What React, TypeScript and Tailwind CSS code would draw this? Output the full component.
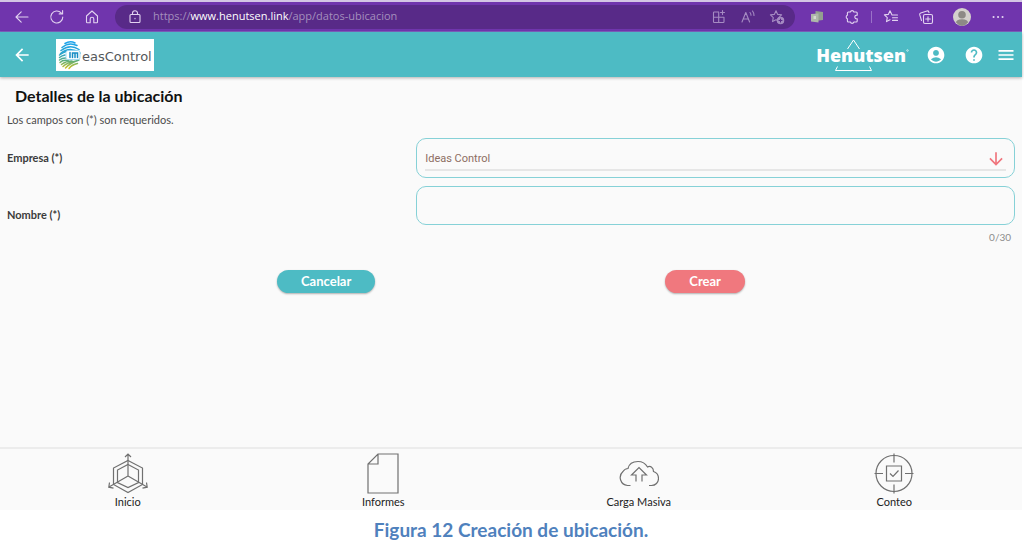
import { useState } from 'react';
import type { ReactNode } from 'react';
import { MdAccountCircle, MdArrowBack, MdArrowDownward, MdHelp, MdMenu } from 'react-icons/md';

function Glyph({ children, className = 'size-4' }: { children: ReactNode; className?: string }) {
  return (
    <svg
      viewBox="0 0 16 16"
      fill="none"
      stroke="currentColor"
      strokeWidth="1.1"
      strokeLinecap="round"
      strokeLinejoin="round"
      className={className}
      aria-hidden="true"
    >
      {children}
    </svg>
  );
}

const star = 'M7 1.8l1.7 3.6 3.9.5-2.9 2.7.8 4L7 10.7l-3.5 1.9.8-4L1.4 5.900l3.900-.5z';

function BrowserBar() {
  return (
    <div className="flex h-8 items-center border-t-2 border-b border-t-[#d3c6e4] border-b-[#7e62c0] bg-[#7035ad] text-[#e2d3f0]">
      <div className="flex w-[115px] shrink-0 items-center gap-[19px] pl-3.5">
        <button type="button" aria-label="Atrás">
          <Glyph>
            <path d="M14 8H2M7.200 2.800L2 8l5.200 5.200" />
          </Glyph>
        </button>
        <button type="button" aria-label="Actualizar">
          <Glyph>
            <path d="M13.800 8A6 6 0 1 1 12.200 3.900M13.600 1.600v3.300h-3.400" />
          </Glyph>
        </button>
        <button type="button" aria-label="Página principal">
          <Glyph>
            <path d="M2.500 7L8 2l5.500 5v6a.8.8 0 0 1-.8.8H9.800V10a1.800 1.800 0 0 0-3.600 0v3.800H3.300a.8.8 0 0 1-.8-.8z" />
          </Glyph>
        </button>
      </div>
      <div className="flex h-6 min-w-0 flex-1 items-center rounded-full bg-[#582a88] pr-2.5 pl-3">
        <Glyph>
          <rect x="3" y="5.500" width="10" height="8" rx="1" />
          <path d="M5.500 5.500V4.200a2.500 2.500 0 0 1 5 0v1.300M8 9.300v.4" />
        </Glyph>
        <div className="ml-2.5 flex-1 truncate font-['Open_Sans','Noto_Sans',sans-serif] text-[11px] text-[#a48fbd]">
          https://<span className="text-white">www.henutsen.link</span>/app/datos-ubicacion
        </div>
        <div className="flex items-center gap-[13px] text-[#a58bc2]">
          <button type="button" aria-label="Aplicaciones">
            <Glyph>
              <path d="M7.500 3H3.200a.7.7 0 0 0-.7.7v9.100c0 .4.300.7.700.7h9.100c.4 0 .7-.3.700-.7V8.200M2.500 8.200H13M7.700 3v10.500M11.500 1.500v4M9.500 3.500h4" />
            </Glyph>
          </button>
          <button type="button" aria-label="Leer en voz alta">
            <Glyph>
              <path d="M2 13L5.800 3.500 9.600 13M3.300 10h5M10 3.500a4 4 0 0 1 1 2.700M12.500 2a6.500 6.500 0 0 1 1.500 4.500" />
            </Glyph>
          </button>
          <button type="button" aria-label="Agregar a favoritos">
            <Glyph>
              <path d={star} />
              <circle cx="11.500" cy="11.500" r="3.200" fill="#a58bc2" />
              <path d="M11.500 10v3M10 11.500h3" stroke="#582a88" />
            </Glyph>
          </button>
        </div>
      </div>
      <div className="flex w-[227px] shrink-0 items-center gap-[19px] pl-3.5">
        <button type="button" aria-label="Extensión">
          <svg viewBox="0 0 16 16" className="size-4" aria-hidden="true">
            <path d="M6.500 2l7.500 1v8l-7.500 1z" fill="#93a08f" />
            <path d="M2 5l7.500-.5v9L2 12.500z" fill="#aeb8aa" />
            <path d="M4.500 7H7v3H4.500z" fill="#d5dad0" />
          </svg>
        </button>
        <button type="button" aria-label="Extensiones">
          <Glyph>
            <path d="M4.400 3h2a1.800 1.800 0 0 1 3.500 0h2.300c.6 0 1 .4 1 1v2.300a1.800 1.800 0 1 0 0 3.400V12c0 .6-.4 1-1 1H9.900a1.800 1.800 0 0 1-3.500 0h-2a1 1 0 0 1-1-1V9.700a1.800 1.800 0 0 1 0-3.400V4a1 1 0 0 1 1-1z" />
          </Glyph>
        </button>
        <span className="-mx-2 h-3 w-px bg-[#9a72c8]" />
        <button type="button" aria-label="Favoritos">
          <Glyph>
            <path d="M9 6L7 1.800 5.300 5.400l-3.900.5 2.900 2.700-.8 4L7 10.700M9 6h5.500M9.500 8.700h5M9.500 11.400h5" />
          </Glyph>
        </button>
        <button type="button" aria-label="Colecciones">
          <Glyph>
            <rect x="5.500" y="5.500" width="9" height="9" rx="1.500" />
            <path d="M10 7.700v4.600M7.700 10h4.600M3.500 11.500L1.700 5.700a1.500 1.500 0 0 1 1-1.800L9 2a1.500 1.500 0 0 1 1.800 1l.2.600" />
          </Glyph>
        </button>
        <button type="button" aria-label="Perfil">
          <svg viewBox="0 0 18 18" className="size-[18px]" aria-hidden="true">
            <circle cx="9" cy="9" r="9" fill="#d4d0cd" />
            <circle cx="9" cy="6.800" r="3.800" fill="#8d8986" />
            <path d="M3 14.500c0-2 2-3.300 6-3.300s6 1.300 6 3.300A9 9 0 0 1 9 18a9 9 0 0 1-6-3.500z" fill="#8d8986" />
          </svg>
        </button>
        <button type="button" aria-label="Más">
          <Glyph>
            <path d="M3.500 8h.1M8 8h.1M12.500 8h.1" strokeWidth="2" />
          </Glyph>
        </button>
      </div>
    </div>
  );
}

function IdeasControlLogo() {
  return (
    <div className="flex h-8 w-[98px] items-center bg-white pl-0.5">
      <svg viewBox="0 0 24 30" className="h-[30px] w-6 shrink-0" fill="none" strokeWidth="1.500" strokeLinecap="round" aria-hidden="true">
        <defs>
          <linearGradient id="print" x1="0" y1="0" x2="0" y2="30" gradientUnits="userSpaceOnUse">
            <stop offset="0" stopColor="#1ba4f2" />
            <stop offset=".45" stopColor="#2aa3cd" />
            <stop offset=".7" stopColor="#5eae79" />
            <stop offset="1" stopColor="#e6c814" />
          </linearGradient>
        </defs>
        <g stroke="url(#print)">
          <path d="M7 3.500Q12 .5 17 3M4 7.500Q11 1.500 19 5.500M3 10.500Q12 3.500 21 9.500M2.500 13.500Q12 6 22 13" />
          <path d="M1.500 15Q5 12.500 8 11.500M1.500 17.500Q4 15.500 7 15M1.500 20Q4 18 7.500 18M2 22.500Q5 19.500 10 20.500M3.500 24.500Q8 21 14 21M5 26.500Q9 22.500 18 21M7.500 28Q11 23.500 21 20M11 28.500Q14 24.500 19.500 23.500" />
        </g>
        <rect x="8" y="10.500" width="14" height="9" rx="2" fill="#fff" stroke="#8ed0ef" strokeWidth=".8" />
        <path d="M12 17.500v-5M14.500 17.500v-4.500h5v4.500M17 13v4.500" stroke="#168cc5" />
      </svg>
      <span className="pt-1 font-['DejaVu_Sans',sans-serif] text-[13px] leading-4 text-[#55585b]">easControl</span>
    </div>
  );
}

function HenutsenLogo() {
  return (
    <div className="relative text-white">
      <span className="block font-['Open_Sans','Noto_Sans',sans-serif] text-[18px] leading-6 font-extrabold">Henutsen</span>
      <svg viewBox="0 0 94 36" className="absolute -top-1 left-0 h-9 w-[94px]" fill="none" stroke="currentColor" aria-hidden="true">
        <path d="M31.500 10L37.500 1l6 9M21.500 27.500l-2 4h36l-2-4" />
        <circle cx="91.500" cy="11.500" r=".8" strokeWidth=".6" />
      </svg>
    </div>
  );
}

function AppHeader() {
  return (
    <header className="relative flex h-[45px] items-center bg-[#4dbbc4] pr-1.5 pl-3 text-white shadow-[0_1px_3px_rgba(0,0,0,0.3)]">
      <button type="button" aria-label="Volver">
        <MdArrowBack className="size-5" />
      </button>
      <div className="ml-6">
        <IdeasControlLogo />
      </div>
      <div className="ml-auto flex items-center">
        <HenutsenLogo />
        <button type="button" aria-label="Cuenta" className="ml-5">
          <MdAccountCircle className="size-5" />
        </button>
        <button type="button" aria-label="Ayuda" className="ml-[18px]">
          <MdHelp className="size-5" />
        </button>
        <button type="button" aria-label="Menú" className="ml-3">
          <MdMenu className="size-5" />
        </button>
      </div>
    </header>
  );
}

function LocationForm() {
  const [name, setName] = useState('');
  return (
    <form className="px-[7px]" onSubmit={(e) => e.preventDefault()}>
      <div className="grid grid-cols-[2fr_3fr] items-center gap-x-2.5 gap-y-2 text-[11px] text-[#3c3c3c]">
        <label htmlFor="empresa" className="font-bold">
          Empresa (*)
        </label>
        <div className="rounded-[10px] border border-[#86d1d7] px-2 py-1.5">
          <div className="relative">
            <select
              id="empresa"
              className="block h-[26px] w-full appearance-none border-b-2 border-[#e6e6e6] bg-transparent pt-1 font-[Roboto,sans-serif] text-[11px] text-[#8d6e63] outline-none"
            >
              <option>Ideas Control</option>
            </select>
            <MdArrowDownward className="pointer-events-none absolute top-1 right-0 size-5 text-[#f0757d]" />
          </div>
        </div>
        <label htmlFor="nombre" className="font-bold">
          Nombre (*)
        </label>
        <div>
          <input
            id="nombre"
            value={name}
            maxLength={30}
            onChange={(e) => setName(e.target.value)}
            className="block h-[39px] w-full rounded-[10px] border border-[#86d1d7] bg-transparent px-2 font-[Roboto,sans-serif] text-[11px] text-[#8d6e63] outline-none"
          />
          <div className="pt-1 pr-1 text-right text-[10px] leading-4 text-[#8c8c8c]">{name.length}/30</div>
        </div>
      </div>
      <div className="mt-[25px] flex justify-evenly gap-5 text-[13px] leading-[23px] font-bold text-white">
        <button type="button" className="rounded-full bg-[#4dbbc4] px-6 shadow-[0_1px_2px_rgba(0,0,0,0.3)]">
          Cancelar
        </button>
        <button type="submit" className="rounded-full bg-[#f0787e] px-6 shadow-[0_1px_2px_rgba(0,0,0,0.3)]">
          Crear
        </button>
      </div>
    </form>
  );
}

const tabs: { label: string; art: ReactNode }[] = [
  {
    label: 'Inicio',
    art: (
      <>
        <path d="M20 7.500L34.500 15v16.500L20 39.500 5.500 31.500V15z" />
        <path d="M20 11.500L30.500 17v12.500L20 34.500 9.500 29.500V17z" />
        <path d="M20 23V1M17 4l3-3 3 3M20 23L1 34M1.500 29.500L.8 34.200l4.700 1M20 23l19 11M38.500 29.500l.7 4.700-4.700 1" />
      </>
    ),
  },
  {
    label: 'Informes',
    art: <path d="M15 1h20v39H5V11zM15 1v10H5" />,
  },
  {
    label: 'Carga Masiva',
    art: (
      <>
        <path d="M11.500 32.500H8.500A8 8 0 0 1 4 18.500a6 6 0 0 1 5-3C10 11 14 8.500 19 8.500c4 0 7.500 2 9.500 5.500 3-1.500 6 .5 6 4.500 3 1 5 3.500 5 7 0 4-3 7-7 7H30" />
        <path d="M17 28.500V22h-4.500L20 14.500l7.500 7.500H23v6.500" />
      </>
    ),
  },
  {
    label: 'Conteo',
    art: (
      <>
        <circle cx="20" cy="20.500" r="18" />
        <path d="M20 .5v9M20 31.500v9M.5 20.500H9M31 20.500h8.500M12.500 13h15v15h-15zM16 20.500l3 3 5.500-6" />
      </>
    ),
  },
];

function BottomNav() {
  return (
    <nav className="grid grid-cols-4 border-t-2 border-[#ececec] pt-1">
      {tabs.map((tab) => (
        <a key={tab.label} href="#" className="flex flex-col items-center text-[11px] leading-4 text-[#222]">
          <svg viewBox="0 0 40 41" className="h-[41px] w-10" fill="none" stroke="#707070" strokeWidth="1.200" aria-hidden="true">
            {tab.art}
          </svg>
          {tab.label}
        </a>
      ))}
    </nav>
  );
}

export default function App() {
  return (
    <div className="flex min-h-screen flex-col bg-white pr-0.5 font-[Lato,sans-serif]">
      <BrowserBar />
      <div className="flex flex-1 flex-col bg-[#fafafa]">
        <AppHeader />
        <main className="flex-1">
          <h1 className="px-[15px] pt-2 text-[16px] leading-[22px] font-bold text-[#111]">Detalles de la ubicación</h1>
          <p className="px-[7px] pt-[5px] pb-2.5 text-[11px] leading-4 text-[#4c4c4c]">Los campos con (*) son requeridos.</p>
          <LocationForm />
        </main>
        <BottomNav />
      </div>
      <p className="h-[38px] text-center text-[19px] leading-10 font-bold text-[#4f81bd]">
        Figura 12 Creación de ubicación.
      </p>
    </div>
  );
}
